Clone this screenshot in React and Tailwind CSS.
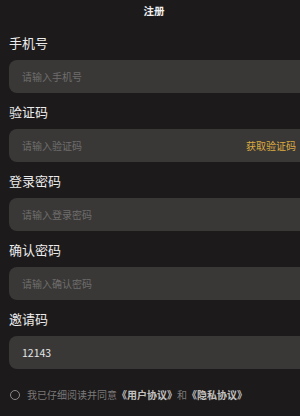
import React from "react";

const font = { fontFamily: '"Noto Sans CJK SC", "Noto Sans", sans-serif' };

function Field({ label, placeholder, value, action }) {
  return (
    <div className="flex flex-col">
      <div className="h-[20px] text-[13px] leading-[20px] text-[#ececec] pl-[9px]">{label}</div>
      <div className="mt-[7px] ml-[9px] w-[300px] h-[33px] rounded-[8px] bg-[#393837] flex items-center pl-[13px] pr-[13px]">
        {value ? (
          <span className="text-[10.5px] text-[#e6e6e6]">{value}</span>
        ) : (
          <span className="text-[10px] text-[#6f6d6c]">{placeholder}</span>
        )}
        {action && (
          <span className="ml-auto text-[10px] text-[#dcab3f]">{action}</span>
        )}
      </div>
      <div className="h-[9px]" />
    </div>
  );
}

export default function App() {
  return (
    <div className="w-[300px] h-[416px] bg-[#1c1a1a] overflow-hidden flex flex-col" style={font}>
      <div className="h-[20px] pt-[3px] flex justify-center pl-[8px]">
        <span className="text-[10.5px] font-bold text-[#f0f0f0] leading-[16px]">注册</span>
      </div>
      <div className="h-[13px]" />
      <Field label="手机号" placeholder="请输入手机号" />
      <Field label="验证码" placeholder="请输入验证码" action="获取验证码" />
      <Field label="登录密码" placeholder="请输入登录密码" />
      <Field label="确认密码" placeholder="请输入确认密码" />
      <Field label="邀请码" value="12143" />
      <div className="mt-[9px] pl-[10px] flex items-center gap-[7px]">
        <span className="w-[10px] h-[10px] rounded-full border border-[#8a8888]" />
        <span className="text-[10px] text-[#7b7979] whitespace-nowrap">
          我已仔细阅读并同意
          <span className="font-bold text-[#c4c2c1]">《用户协议》</span>
          和
          <span className="font-bold text-[#c4c2c1]">《隐私协议》</span>
        </span>
      </div>
    </div>
  );
}
